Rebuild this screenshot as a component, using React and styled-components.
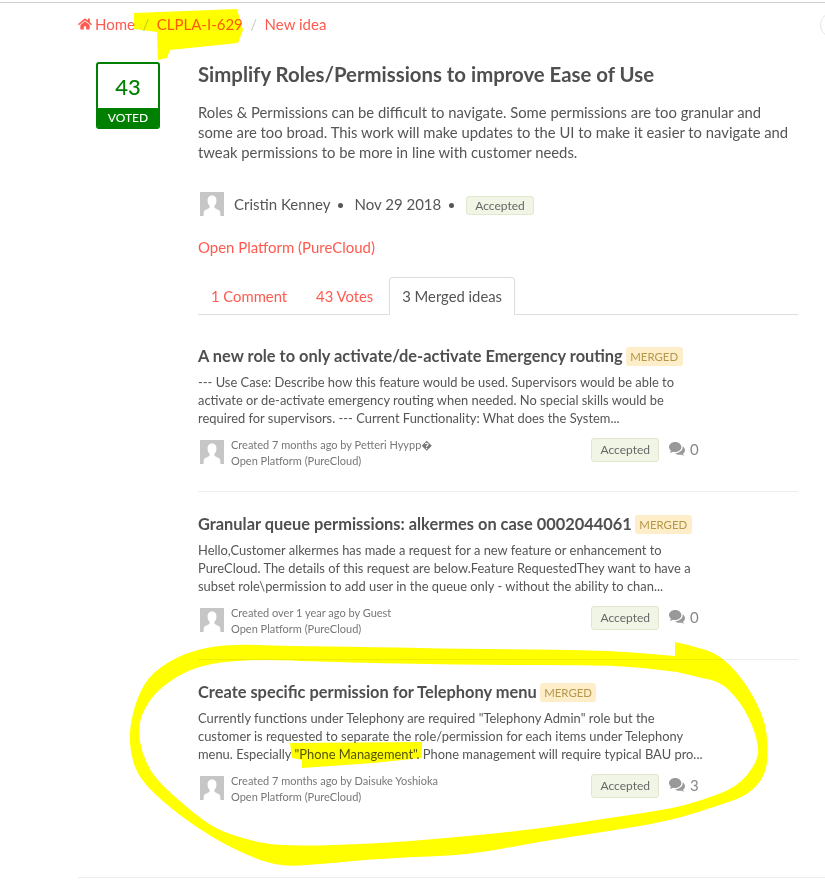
import React from "react";
import styled, { createGlobalStyle } from "styled-components";
import { FaHome } from "react-icons/fa";

const Global = createGlobalStyle`
  html, body { margin: 0; padding: 0; background: #fff; }
  body { width: 825px; height: 881px; overflow: hidden; font-family: Lato, "Open Sans", sans-serif; color: #555; }
  #root { position: relative; height: 881px; overflow: hidden; }
`;

const TopRule = styled.div`
  margin-top: 2px;
  height: 1px;
  background: #cfcfd4;
`;
const Page = styled.div`
  margin-left: 78px;
  height: 874px;
  border-bottom: 1px solid #eee;
`;
const Breadcrumb = styled.nav`
  display: flex;
  align-items: center;
  height: 42px;
  font-size: 15px;
`;
const Crumb = styled.a`
  color: #ff5a4f;
  display: inline-flex;
  align-items: center;
  gap: 3px;
`;
const Sep = styled.span`
  color: #ccc;
  margin: 0 7.5px;
`;
const Main = styled.div`
  display: flex;
  align-items: flex-start;
  padding: 16px 0 0 18px;
`;
const Vote = styled.div`
  flex: none;
  width: 64px;
  height: 67px;
  box-sizing: border-box;
  border: 2px solid #008000;
  border-radius: 3px;
  display: flex;
  flex-direction: column;
  overflow: hidden;
  margin-top: 1px;
`;
const VoteCount = styled.div`
  flex: 1;
  display: flex;
  align-items: center;
  justify-content: center;
  font-size: 22px;
  color: #008000;
  font-weight: 500;
`;
const VoteLabel = styled.div`
  height: 19px;
  background: #008000;
  color: #fff;
  font-size: 12px;
  line-height: 20px;
  text-align: center;
  font-weight: 500;
`;
const Content = styled.div`
  flex: none;
  width: 600px;
  margin-left: 38px;
`;
const Title = styled.h1`
  margin: 0;
  font-size: 20.35px;
  line-height: 26px;
  font-weight: 700;
  color: #4f4f4f;
`;
const Description = styled.p`
  margin: 15px 0 0;
  font-size: 14.8px;
  line-height: 20px;
  color: #555;
  width: 596px;
`;
const AuthorRow = styled.div`
  display: flex;
  align-items: center;
  margin: 29px 0 0 2px;
  height: 26px;
  font-size: 15px;
  color: #555;
`;
const AuthorName = styled.span`
  margin-left: 10px;
`;
const Dot = styled.span`
  width: 5px;
  height: 5px;
  border-radius: 50%;
  background: #555;
  margin: 2px 11px 0 8px;
`;
const SmallBadge = styled.span`
  margin-left: 1px;
  margin-top: 3px;
  height: 19px;
  line-height: 18px;
  box-sizing: border-box;
  padding: 0 8px;
  font-size: 12px;
  color: #666;
  background: #f1f5e6;
  border: 1px solid #e0e8cd;
  border-radius: 3px;
`;
const CategoryLink = styled.a`
  display: block;
  margin-top: 20px;
  font-size: 14.95px;
  line-height: 20px;
  color: #ff5a4f;
`;
const Tabs = styled.div`
  display: flex;
  margin-top: 20px;
  height: 37px;
  border-bottom: 1px solid #ddd;
  font-size: 14.8px;
`;
const Tab = styled.div`
  box-sizing: border-box;
  height: 38px;
  padding: 0 12px;
  line-height: 37px;
  color: ${p => (p.$active ? "#555" : "#ff5a4f")};
  border: 1px solid ${p => (p.$active ? "#ddd" : "transparent")};
  border-bottom: 1px solid ${p => (p.$active ? "#fff" : "transparent")};
  border-radius: 4px 4px 0 0;
  background: ${p => (p.$active ? "#fff" : "transparent")};
  margin-right: 3px;
`;
const ItemList = styled.div`
  margin-top: 9px;
`;
const Item = styled.article`
  height: 168px;
  box-sizing: border-box;
  padding-top: 20px;
  border-bottom: ${p => (p.$last ? "none" : "1px solid #eee")};
`;
const ItemHead = styled.div`
  display: flex;
  align-items: center;
  height: 22px;
`;
const ItemTitle = styled.h2`
  margin: 0;
  font-size: 16.4px;
  font-weight: 700;
  color: #4f4f4f;
  line-height: 21px;
`;
const Merged = styled.span`
  margin-left: 3px;
  margin-top: 2px;
  height: 19px;
  line-height: 19px;
  padding: 0 4.5px;
  font-size: 11.4px;
  border-radius: 3px;
  background: #fdeec9;
  color: #b5964a;
`;
const ItemText = styled.p`
  margin: 7px 0 0;
  font-size: 12.9px;
  line-height: 18px;
  color: #555;
  width: 510px;
`;
const Meta = styled.div`
  display: flex;
  align-items: flex-start;
  margin: 11px 0 0 2px;
  width: 500px;
  height: 26px;
`;
const MetaText = styled.div`
  flex: 1;
  margin: -1px 0 0 7px;
  font-size: 11px;
  line-height: 16px;
  color: #777;
`;
const Badge = styled.span`
  height: 24px;
  line-height: 22px;
  box-sizing: border-box;
  padding: 0 8px;
  font-size: 12px;
  color: #666;
  background: #f1f5e6;
  border: 1px solid #dfe8cc;
  border-radius: 3px;
`;
const Comments = styled.span`
  display: inline-flex;
  align-items: center;
  height: 22px;
  gap: 5px;
  margin-left: 10px;
  width: 31px;
  color: #888;
  font-size: 15px;
`;
const CommentIcon = styled.svg`
  flex: none;
  width: 16px;
  height: 14px;
  fill: #999;
`;
const Avatar = styled.svg`
  flex: none;
  width: 24px;
  height: 24px;
  display: block;
  margin-top: ${p => (p.$inline ? "2px" : "0")};
`;
const Marks = styled.svg`
  position: absolute;
  left: 0;
  top: 0;
  width: 825px;
  height: 881px;
  mix-blend-mode: multiply;
  pointer-events: none;
`;
const EdgeCircle = styled.div`
  position: absolute;
  left: 820px;
  top: 12px;
  width: 26px;
  height: 26px;
  box-sizing: border-box;
  border: 1px solid #e4e4e4;
  border-radius: 50%;
`;

const UserIcon = ({ inline }) => (
  <Avatar viewBox="0 0 24 24" $inline={inline}>
    <rect width="24" height="24" fill="#c6c6c6" />
    <path d="M12 3.500c-3 0-4.600 2.300-4.400 5.400.1 2.200 1 4 2 5v1.600c-.5 1-3.600 1.800-5 3-.7.6-1 2-1 5.500h16.800c0-3.500-.3-4.900-1-5.500-1.400-1.200-4.500-2-5-3v-1.600c1-1 1.900-2.800 2-5 .2-3.100-1.400-5.400-4.400-5.400z" fill="#fff" />
  </Avatar>
);

const BubblesIcon = () => (
  <CommentIcon viewBox="0 0 16 14">
    <path d="M6.200 0C2.800 0 0 2.200 0 5c0 1.500.8 2.800 2 3.700-.2.9-.7 1.700-1.300 2.300 1.200-.1 2.500-.6 3.500-1.300.6.2 1.300.3 2 .3 3.400 0 6.200-2.200 6.200-5S9.600 0 6.200 0z" />
    <path d="M13.600 4.200c.1.3.1.5.1.8 0 3.400-3.300 6.100-7.400 6.200 1 1 2.600 1.600 4.300 1.600.6 0 1.100-.1 1.600-.2.8.6 1.800 1 2.800 1.100-.5-.5-.9-1.200-1-1.900C15.100 11 16 9.800 16 8.500c0-1.800-1-3.300-2.400-4.300z" />
  </CommentIcon>
);

const items = [
  {
    title: "A new role to only activate/de-activate Emergency routing",
    text: "--- Use Case: Describe how this feature would be used. Supervisors would be able to activate or de-activate emergency routing when needed. No special skills would be required for supervisors. --- Current Functionality: What does the System...",
    meta: "Created 7 months ago by Petteri Hyypp\uFFFD",
    count: 0,
  },
  {
    title: "Granular queue permissions: alkermes on case 0002044061",
    text: "Hello,Customer alkermes has made a request for a new feature or enhancement to PureCloud. The details of this request are below.Feature RequestedThey want to have a subset role\\permission to add user in the queue only - without the ability to chan...",
    meta: "Created over 1 year ago by Guest",
    count: 0,
  },
  {
    title: "Create specific permission for Telephony menu",
    text: "Currently functions under Telephony are required \"Telephony Admin\" role but the customer is requested to separate the role/permission for each items under Telephony menu. Especially \"Phone Management\". Phone management will require typical BAU pro...",
    meta: "Created 7 months ago by Daisuke Yoshioka",
    count: 3,
  },
];

const smooth = pts => {
  let d = `M${pts[0][0]} ${pts[0][1]}`;
  for (let i = 1; i < pts.length - 1; i++) {
    const mx = (pts[i][0] + pts[i + 1][0]) / 2;
    const my = (pts[i][1] + pts[i + 1][1]) / 2;
    d += `Q${pts[i][0]} ${pts[i][1]} ${mx} ${my}`;
  }
  const last = pts[pts.length - 1];
  return d + `L${last[0]} ${last[1]}Z`;
};

const outer = [
  [675, 642], [703, 648], [725, 659], [748, 686], [765, 720], [768, 747], [766, 775], [748, 795], [723, 804],
  [670, 821], [603, 832], [537, 842], [470, 855], [387, 858], [320, 864], [277, 867], [233, 849], [197, 828],
  [163, 802], [140, 779], [131, 757], [129, 730], [137, 697], [152, 672], [186, 652], [227, 644], [287, 646], [370, 647],
  [470, 649], [603, 650], [675, 656],
];
const inner = [
  [677, 672], [703, 678], [723, 683], [745, 708], [759, 743], [757, 763], [737, 787], [703, 800], [670, 809], [603, 819],
  [537, 829], [470, 836], [387, 843], [280, 847], [237, 837], [210, 826], [177, 799], [153, 776], [142, 753], [138, 730],
  [143, 710], [160, 687], [197, 665], [253, 659], [330, 662], [470, 665], [603, 665], [643, 668],
];

export default function App() {
  return (
    <>
      <Global />
      <TopRule />
      <Page>
        <Breadcrumb>
          <Crumb><FaHome size={14} />Home</Crumb>
          <Sep>/</Sep>
          <Crumb>CLPLA-I-629</Crumb>
          <Sep>/</Sep>
          <Crumb>New idea</Crumb>
        </Breadcrumb>
        <Main>
          <Vote>
            <VoteCount>43</VoteCount>
            <VoteLabel>VOTED</VoteLabel>
          </Vote>
          <Content>
            <Title>Simplify Roles/Permissions to improve Ease of Use</Title>
            <Description>
              Roles &amp; Permissions can be difficult to navigate. Some permissions are too granular and some are too broad. This work will make updates to the UI to make it easier to navigate and tweak permissions to be more in line with customer needs.
            </Description>
            <AuthorRow>
              <UserIcon />
              <AuthorName>Cristin Kenney</AuthorName>
              <Dot />
              Nov 29 2018
              <Dot />
              <SmallBadge>Accepted</SmallBadge>
            </AuthorRow>
            <CategoryLink>Open Platform (PureCloud)</CategoryLink>
            <Tabs>
              <Tab>1 Comment</Tab>
              <Tab>43 Votes</Tab>
              <Tab $active>3 Merged ideas</Tab>
            </Tabs>
            <ItemList>
              {items.map((it, i) => (
                <Item key={it.title} $last={i === items.length - 1}>
                  <ItemHead>
                    <ItemTitle>{it.title}</ItemTitle>
                    <Merged>MERGED</Merged>
                  </ItemHead>
                  <ItemText>{it.text}</ItemText>
                  <Meta>
                    <UserIcon inline />
                    <MetaText>
                      {it.meta}
                      <br />
                      Open Platform (PureCloud)
                    </MetaText>
                    <Badge>Accepted</Badge>
                    <Comments><BubblesIcon />{it.count}</Comments>
                  </Meta>
                </Item>
              ))}
            </ItemList>
          </Content>
        </Main>
      </Page>
      <EdgeCircle />
      <Marks viewBox="0 0 825 881">
        <path fill="#ffff00" d="M134 13L237 9L243 30L238 43L170 50L167 58L158 60L157 32L134 29Z" />
        <path fill="#ffff00" d="M290 743L422 742L422 758L373 763L302 768L302 760L292 758Z" />
        <path fill="#ffff00" fillRule="evenodd" d={smooth(outer) + smooth(inner)} />
      </Marks>
    </>
  );
}
